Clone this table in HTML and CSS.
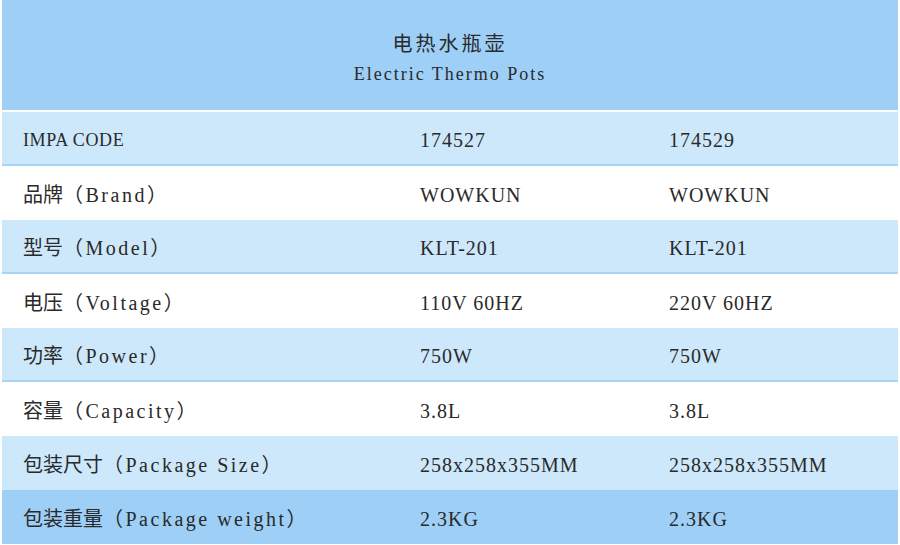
FILE: index.html
```html
<!DOCTYPE html>
<html lang="zh">
<head>
<meta charset="utf-8">
<title>电热水瓶壶</title>
<link rel="stylesheet" href="styles.css">
</head>
<body>
<div class="sheet">
  <header class="head">
    <div class="title-zh">电热水瓶壶</div>
    <div class="title-en">Electric Thermo Pots</div>
  </header>
  <div class="rows">
    <div class="row light lined"><div class="cell label caps">IMPA CODE</div><div class="cell value">174527</div><div class="cell value">174529</div></div>
    <div class="row"><div class="cell label"><span class="zh">品牌</span>（Brand）</div><div class="cell value">WOWKUN</div><div class="cell value">WOWKUN</div></div>
    <div class="row light lined"><div class="cell label"><span class="zh">型号</span>（Model）</div><div class="cell value">KLT-201</div><div class="cell value">KLT-201</div></div>
    <div class="row"><div class="cell label"><span class="zh">电压</span>（Voltage）</div><div class="cell value">110V 60HZ</div><div class="cell value">220V 60HZ</div></div>
    <div class="row light lined"><div class="cell label"><span class="zh">功率</span>（Power）</div><div class="cell value">750W</div><div class="cell value">750W</div></div>
    <div class="row"><div class="cell label"><span class="zh">容量</span>（Capacity）</div><div class="cell value">3.8L</div><div class="cell value">3.8L</div></div>
    <div class="row light"><div class="cell label"><span class="zh">包装尺寸</span>（Package Size）</div><div class="cell value">258x258x355MM</div><div class="cell value">258x258x355MM</div></div>
    <div class="row dark"><div class="cell label"><span class="zh">包装重量</span>（Package weight）</div><div class="cell value">2.3KG</div><div class="cell value">2.3KG</div></div>
  </div>
</div>
</body>
</html>
```
FILE: styles.css
```css
html, body {
  margin: 0;
  padding: 0;
  background: #ffffff;
}
.sheet {
  width: 896px;
  margin: 0 0 0 2px;
  color: #2a2a2a;
}
.head {
  height: 110px;
  background: #9dcff7;
  display: flex;
  flex-direction: column;
  align-items: center;
  padding-top: 31px;
  box-sizing: border-box;
  margin-bottom: 2px;
}
.title-zh {
  font-family: "Noto Sans CJK SC", sans-serif;
  font-size: 20px;
  line-height: 24px;
  letter-spacing: 3px;
  color: #2a2a2a;
}
.title-en {
  font-family: "Liberation Serif", serif;
  font-size: 18px;
  line-height: 22px;
  margin-top: 8px;
  letter-spacing: 2px;
  color: #2a2a2a;
}
.rows {
  display: flex;
  flex-direction: column;
}
.row {
  height: 54px;
  box-sizing: border-box;
  display: grid;
  grid-template-columns: 397px 249px 250px;
  align-items: center;
  background: #ffffff;
}
.row.light {
  background: #cde8fa;
}
.row.dark {
  background: #9dcff7;
}
.row.lined {
  border-bottom: 2px solid #a9d5f5;
}
.cell {
  padding-left: 21px;
  padding-top: 3px;
  font-family: "Liberation Serif", "Noto Sans CJK SC", serif;
  font-size: 20px;
  line-height: 24px;
  white-space: nowrap;
}
.label {
  letter-spacing: 2.5px;
}
.label .zh {
  letter-spacing: 0;
}
.label.caps {
  font-size: 18px;
  letter-spacing: 0.6px;
}
.value {
  letter-spacing: 1px;
}
```
